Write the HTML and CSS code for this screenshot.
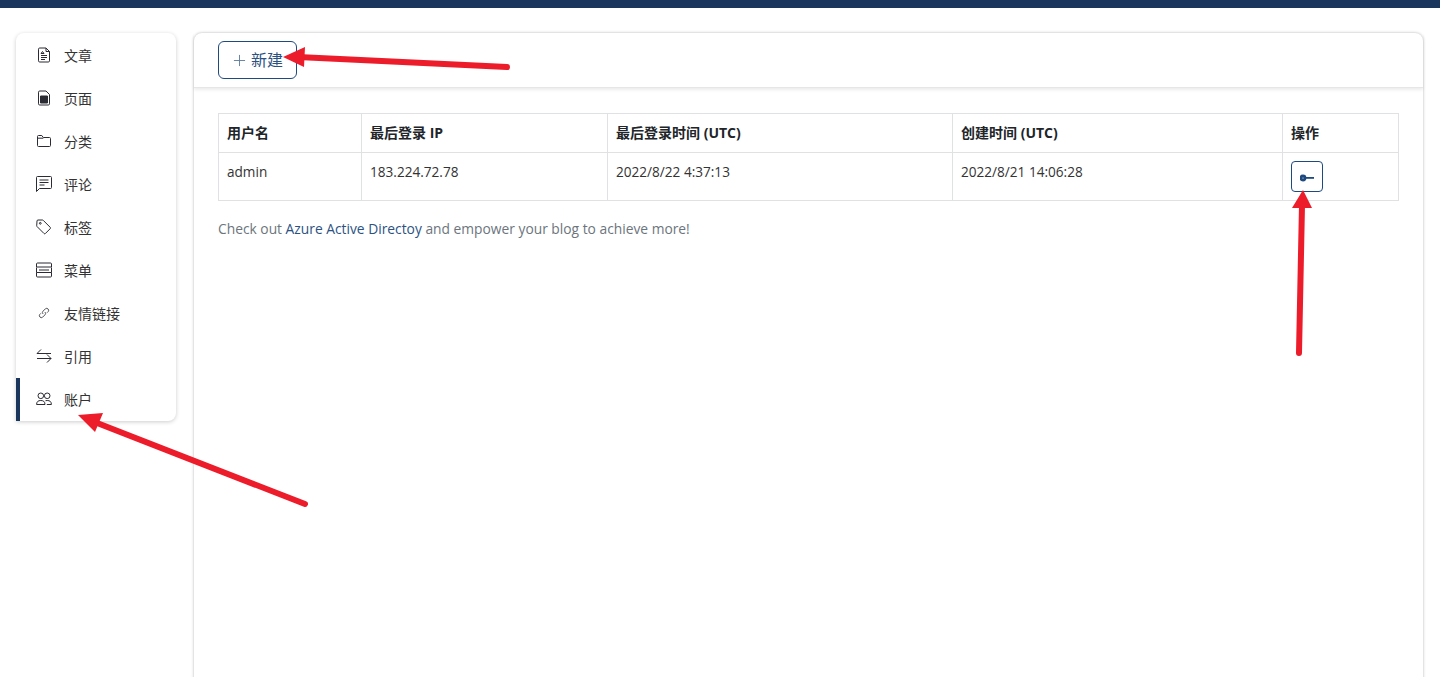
FILE: index.html
```html
<!DOCTYPE html>
<html lang="zh-CN">
<head>
    <meta charset="UTF-8">
    <meta name="viewport" content="width=device-width, initial-scale=1.0">
    <title>账户</title>
    <link rel="stylesheet" href="styles.css">
</head>
<body>
    <div class="topbar"></div>

    <div class="layout">
        <!-- Menu laterale -->
        <nav class="sidebar">
            <a class="side-item" href="#">
                <svg class="side-icon" viewBox="0 0 16 16"><path d="M2.500 2.200A1.200 1.200 0 0 1 3.700 1H10l3.500 3.500v9.300a1.200 1.200 0 0 1-1.200 1.200H3.700a1.200 1.200 0 0 1-1.200-1.200z"/><path d="M10 1v3.500h3.500M5 8.500h6M5 10.500h6M5 12.500h4M5 6.500l1.500-2 1.500 2z"/></svg>
                <span>文章</span>
            </a>
            <a class="side-item" href="#">
                <svg class="side-icon" viewBox="0 0 16 16"><path d="M2.500 2.200A1.200 1.200 0 0 1 3.700 1H10l3.500 3.500v9.300a1.200 1.200 0 0 1-1.200 1.200H3.700a1.200 1.200 0 0 1-1.200-1.200z"/><path class="solid" d="M4.500 6h7v7h-7z"/></svg>
                <span>页面</span>
            </a>
            <a class="side-item" href="#">
                <svg class="side-icon" viewBox="0 0 16 16"><path d="M1.500 3.500a1 1 0 0 1 1-1h3.300l1.500 2h6.200a1 1 0 0 1 1 1v7a1 1 0 0 1-1 1h-11a1 1 0 0 1-1-1zM1.500 5.200h5.800"/></svg>
                <span>分类</span>
            </a>
            <a class="side-item" href="#">
                <svg class="side-icon" viewBox="0 0 16 16"><path d="M.5 1.500a1 1 0 0 1 1-1h13a1 1 0 0 1 1 1v10a1 1 0 0 1-1 1H3.500l-3 3z"/><path d="M3.500 4h9M3.500 6.500h9M3.500 9h5"/></svg>
                <span>评论</span>
            </a>
            <a class="side-item" href="#">
                <svg class="side-icon" viewBox="0 0 16 16"><path d="M1 2a1 1 0 0 1 1-1h4.500a1 1 0 0 1 .7.300l7 7a1 1 0 0 1 0 1.400l-4.800 4.800a1 1 0 0 1-1.400 0l-7-7a1 1 0 0 1-.3-.7z"/><circle cx="4.300" cy="4.300" r=".9"/></svg>
                <span>标签</span>
            </a>
            <a class="side-item" href="#">
                <svg class="side-icon" viewBox="0 0 16 16"><path d="M.5 2a1 1 0 0 1 1-1h13a1 1 0 0 1 1 1v3h-15zM.5 5.500v5M15.500 5.500v5M.5 10.500h15v3.500a1 1 0 0 1-1 1h-13a1 1 0 0 1-1-1zM3 8h10"/></svg>
                <span>菜单</span>
            </a>
            <a class="side-item" href="#">
                <svg class="side-icon side-icon-small" viewBox="0 0 16 16"><path d="M6.800 9.200a2.500 2.500 0 0 1 0-3.500l3-3a2.500 2.500 0 0 1 3.500 3.500l-1.400 1.400M9.200 6.800a2.500 2.500 0 0 1 0 3.500l-3 3a2.500 2.500 0 0 1-3.500-3.500l1.400-1.400"/></svg>
                <span>友情链接</span>
            </a>
            <a class="side-item" href="#">
                <svg class="side-icon" viewBox="0 0 16 16"><path d="M1 5.500h14M5 1.500l-4 4M1 10.500h14M11 6.500l4 4-4 4"/></svg>
                <span>引用</span>
            </a>
            <a class="side-item active" href="#">
                <svg class="side-icon" viewBox="0 0 16 16"><circle cx="4.800" cy="4.800" r="2.800"/><circle cx="11.200" cy="4.800" r="2.800"/><path d="M.6 13.500c0-2.800 1.500-4 4.200-4s4.200 1.200 4.200 4zM9.500 9.700c.5-.1 1.100-.2 1.700-.2 2.700 0 4.200 1.200 4.200 4h-4.600"/></svg>
                <span>账户</span>
            </a>
        </nav>

        <main class="panel">
            <div class="panel-head">
                <button class="btn-new">
                    <svg class="plus" viewBox="0 0 14 14"><path d="M7 1v12M1 7h12"/></svg>
                    <span class="btn-label">新建</span>
                </button>
            </div>

            <div class="panel-body">
                <table class="users">
                    <colgroup>
                        <col class="col-name">
                        <col class="col-ip">
                        <col class="col-last">
                        <col class="col-created">
                        <col>
                    </colgroup>
                    <thead>
                        <tr>
                            <th>用户名</th>
                            <th>最后登录 IP</th>
                            <th>最后登录时间 (UTC)</th>
                            <th>创建时间 (UTC)</th>
                            <th>操作</th>
                        </tr>
                    </thead>
                    <tbody>
                        <tr>
                            <td>admin</td>
                            <td>183.224.72.78</td>
                            <td>2022/8/22 4:37:13</td>
                            <td>2022/8/21 14:06:28</td>
                            <td>
                                <button class="btn-key">
                                    <svg class="key" viewBox="0 0 14 8"><path fill-rule="evenodd" d="M3 .6a3.400 3.400 0 1 0 0 6.800A3.400 3.400 0 0 0 3 .6zm0 2.800a.6.6 0 1 1 0 1.200.6.6 0 0 1 0-1.200z"/><path d="M5.500 3h8.500v1.800H5.500z"/></svg>
                                </button>
                            </td>
                        </tr>
                    </tbody>
                </table>
                <p class="note">Check out <a href="#">Azure Active Directoy</a> and empower your blog to achieve more!</p>
            </div>
        </main>
    </div>

    <!-- Frecce rosse sopra lo screenshot -->
    <svg class="arrows" viewBox="0 0 1440 677">
        <path class="shaft" d="M507 67L298 57M1299 353L1302 205M305 504L92 421"/>
        <path class="head" d="M283 57L305 47L304 67zM1303 190L1312 208L1292 208zM78 415L103 413L95 432z"/>
    </svg>
</body>
</html>
```

FILE: styles.css
```css
body {
    font-family: "Open Sans", "Noto Sans CJK SC", sans-serif;
    font-size: 14px;
    background-color: #fff;
    color: #212529;
    margin: 0;
    height: 677px;
    overflow: hidden;
}

a {
    color: inherit;
    text-decoration: none;
}

.topbar {
    height: 8px;
    background-color: #1b365d;
}

.layout {
    display: flex;
    align-items: flex-start;
    gap: 18px;
    padding: 25px 17px 0 16px;
    height: 644px;
}

/* Sidebar */
.sidebar {
    width: 160px;
    flex-shrink: 0;
    display: flex;
    flex-direction: column;
    padding-top: 1px;
    border-radius: 8px 8px 8px 0;
    background-color: #fff;
    box-shadow: 0 1px 4px rgba(0, 0, 0, 0.2);
    overflow: hidden;
}

.side-item {
    display: flex;
    align-items: center;
    gap: 12px;
    height: 43px;
    padding-left: 20px;
    padding-bottom: 2px;
    box-sizing: border-box;
    color: #333;
}

.side-item.active {
    padding-left: 16px;
    border-left: 4px solid #1b365d;
}

.side-icon {
    width: 16px;
    height: 16px;
    fill: none;
    stroke: #2b2b33;
    stroke-width: 1;
}

.side-icon-small {
    transform: scale(0.8);
}

.side-icon .solid {
    fill: #2b2b33;
}

/* Pannello principale */
.panel {
    flex: 1;
    height: 660px;
    border-radius: 8px 8px 0 0;
    background-color: #fff;
    box-shadow: 0 0 3px rgba(0, 0, 0, 0.3);
}

.panel-head {
    height: 55px;
    box-sizing: border-box;
    padding: 8px 24px;
    border-bottom: 1px solid #e6e6e6;
    box-shadow: 0 2px 3px rgba(0, 0, 0, 0.08);
}

.btn-new {
    display: flex;
    align-items: center;
    gap: 5px;
    width: 79px;
    height: 38px;
    padding: 0 0 0 14px;
    font-family: inherit;
    font-size: 16px;
    color: #2c5282;
    background-color: #fff;
    border: 1px solid #1f4a80;
    border-radius: 6px;
}

.btn-label {
    margin-top: -2px;
}

.plus {
    width: 13px;
    height: 13px;
    fill: none;
    stroke: #5f7c9f;
    stroke-width: 1;
}

.panel-body {
    padding: 25px 24px 0;
}

.users {
    width: 1181px;
    table-layout: fixed;
    border-collapse: collapse;
    border: 1px solid #dfe1e3;
}

.col-name { width: 143px; }
.col-ip { width: 246px; }
.col-last { width: 345px; }
.col-created { width: 330px; }

.users th,
.users td {
    border: 1px solid #dfe1e3;
    padding: 0 8px;
    text-align: left;
    vertical-align: top;
}

.users th {
    height: 39px;
    box-sizing: border-box;
    vertical-align: middle;
    font-weight: 700;
    line-height: 20px;
    color: #212529;
}

.users td {
    height: 48px;
    padding-top: 9px;
    box-sizing: border-box;
    font-size: 13.6px;
    color: #333;
}

.btn-key {
    display: block;
    width: 32px;
    height: 31px;
    margin-top: -1px;
    padding: 0;
    background-color: #fff;
    border: 1px solid #1f4a80;
    border-radius: 4px;
}

.key {
    display: block;
    width: 14px;
    height: 8px;
    margin: 2px auto 0;
    fill: #1f4a80;
}

.note {
    margin: 18px 0 0;
    font-size: 13.8px;
    color: #6c757d;
}

.note a {
    color: #2c5282;
}

/* Frecce */
.arrows {
    position: absolute;
    top: 0;
    left: 0;
    width: 1440px;
    height: 677px;
    pointer-events: none;
}

.shaft {
    fill: none;
    stroke: #ed1c2a;
    stroke-width: 6;
    stroke-linecap: round;
}

.head {
    fill: #ed1c2a;
}
```
